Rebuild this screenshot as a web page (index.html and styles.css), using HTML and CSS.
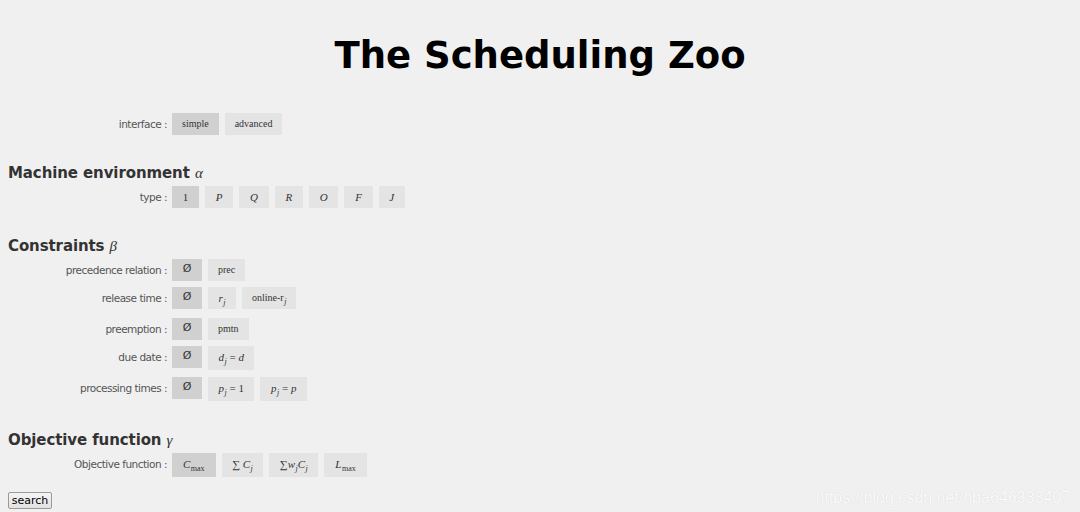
FILE: index.html
```html
<!DOCTYPE html>
<html lang="en">
<head>
<meta charset="utf-8">
<title>The Scheduling Zoo</title>
<link rel="stylesheet" href="styles.css">
</head>
<body>
<h1 class="title">The Scheduling Zoo</h1>

<div class="rows">
  <div class="row">
    <span class="label">interface :</span>
    <div class="opts">
      <span class="opt sel">simple</span>
      <span class="opt">advanced</span>
    </div>
  </div>
</div>

<h2 class="section">Machine environment <i class="greek">α</i></h2>
<div class="rows">
  <div class="row">
    <span class="label">type :</span>
    <div class="opts">
      <span class="opt sel math type">1</span>
      <span class="opt math type"><i>P</i></span>
      <span class="opt math type"><i>Q</i></span>
      <span class="opt math type"><i>R</i></span>
      <span class="opt math type"><i>O</i></span>
      <span class="opt math type"><i>F</i></span>
      <span class="opt math type"><i>J</i></span>
    </div>
  </div>
</div>

<h2 class="section">Constraints <i class="greek">β</i></h2>
<div class="rows">
  <div class="row">
    <span class="label">precedence relation :</span>
    <div class="opts">
      <span class="opt sel empty">Ø</span>
      <span class="opt">prec</span>
    </div>
  </div>
  <div class="row row-sub">
    <span class="label">release time :</span>
    <div class="opts">
      <span class="opt sel empty">Ø</span>
      <span class="opt math"><i>r</i><sub><i>j</i></sub></span>
      <span class="opt">online-r<sub><i>j</i></sub></span>
    </div>
  </div>
  <div class="row">
    <span class="label">preemption :</span>
    <div class="opts">
      <span class="opt sel empty">Ø</span>
      <span class="opt">pmtn</span>
    </div>
  </div>
  <div class="row row-sub">
    <span class="label">due date :</span>
    <div class="opts">
      <span class="opt sel empty">Ø</span>
      <span class="opt math tall"><i>d</i><sub><i>j</i></sub> = <i>d</i></span>
    </div>
  </div>
  <div class="row row-sub">
    <span class="label">processing times :</span>
    <div class="opts">
      <span class="opt sel empty">Ø</span>
      <span class="opt math tall"><i>p</i><sub><i>j</i></sub> = 1</span>
      <span class="opt math tall"><i>p</i><sub><i>j</i></sub> = <i>p</i></span>
    </div>
  </div>
</div>

<h2 class="section">Objective function <i class="greek">γ</i></h2>
<div class="rows">
  <div class="row">
    <span class="label">Objective function :</span>
    <div class="opts">
      <span class="opt sel math tall wide"><i>C</i><sub>max</sub></span>
      <span class="opt math tall">∑ <i>C</i><sub><i>j</i></sub></span>
      <span class="opt math tall">∑<i>w</i><sub><i>j</i></sub><i>C</i><sub><i>j</i></sub></span>
      <span class="opt math tall wide"><i>L</i><sub>max</sub></span>
    </div>
  </div>
</div>

<button class="search" type="button">search</button>

<div class="watermark">https://blog.csdn.net/hba646333407</div>
</body>
</html>
```

FILE: styles.css
```css
html, body {
  background: #f0f0f0;
}

body {
  margin: 0;
  padding: 8px;
  font-family: "DejaVu Sans", Verdana, sans-serif;
  color: #333;
  position: relative;
  min-height: 496px;
}

.title {
  margin: 26px 0 35px;
  text-align: center;
  font-size: 37px;
  line-height: 44px;
  font-weight: bold;
  color: #000;
  letter-spacing: 0;
}

.section {
  margin: 28px 0 3px;
  font-size: 15px;
  line-height: 20px;
  font-weight: bold;
  color: #333;
  letter-spacing: -0.1px;
}

.greek {
  font-family: "Liberation Serif", "Times New Roman", serif;
  font-weight: normal;
  font-style: italic;
  font-size: 15px;
}

.rows {
  display: flex;
  flex-direction: column;
  gap: 6px;
}

.row {
  display: flex;
  align-items: flex-start;
  min-height: 22px;
}

.row-sub {
  min-height: 25px;
}

.label {
  width: 159px;
  flex: none;
  text-align: right;
  font-size: 10.5px;
  line-height: 22px;
  color: #555;
  letter-spacing: -0.5px;
  padding-right: 5px;
}

.opts {
  display: flex;
  align-items: flex-start;
  gap: 6px;
}

.opt {
  display: inline-block;
  height: 22px;
  line-height: 22px;
  padding: 0 10px;
  text-align: center;
  background: #e4e4e4;
  font-family: "Liberation Serif", "Times New Roman", serif;
  font-size: 10px;
  color: #333;
  white-space: pre;
}

.opt.sel {
  background: #d0d0d0;
}

.opt.math {
  font-size: 11px;
  padding: 0 10.5px;
}

.opt.type {
  padding: 0 10.75px;
}

.opt.tall {
  height: 24px;
  line-height: 23px;
}

.opt.wide {
  padding: 0 11px;
}

.opt.empty {
  font-family: "DejaVu Sans", Verdana, sans-serif;
  font-size: 11px;
  width: 30px;
  padding: 0;
  line-height: 20px;
}

.opt sub {
  font-size: 8px;
  vertical-align: -3px;
  line-height: 0;
  margin-left: 0.5px;
}

.search {
  margin-top: 15px;
  display: block;
  height: 17px;
  width: 44px;
  padding: 0;
  font-family: "DejaVu Sans", Verdana, sans-serif;
  font-size: 11px;
  line-height: 15px;
  color: #000;
  background: linear-gradient(#f4f4f4, #e2e2e2);
  border: 1px solid #9a9a9a;
  border-radius: 2px;
}

.watermark {
  position: absolute;
  right: 10px;
  bottom: 10px;
  font-family: "Liberation Sans", Arial, sans-serif;
  font-size: 16px;
  color: #fbfbfb;
  text-shadow: 0 0 1px rgba(0, 0, 0, 0.14);
}
```
